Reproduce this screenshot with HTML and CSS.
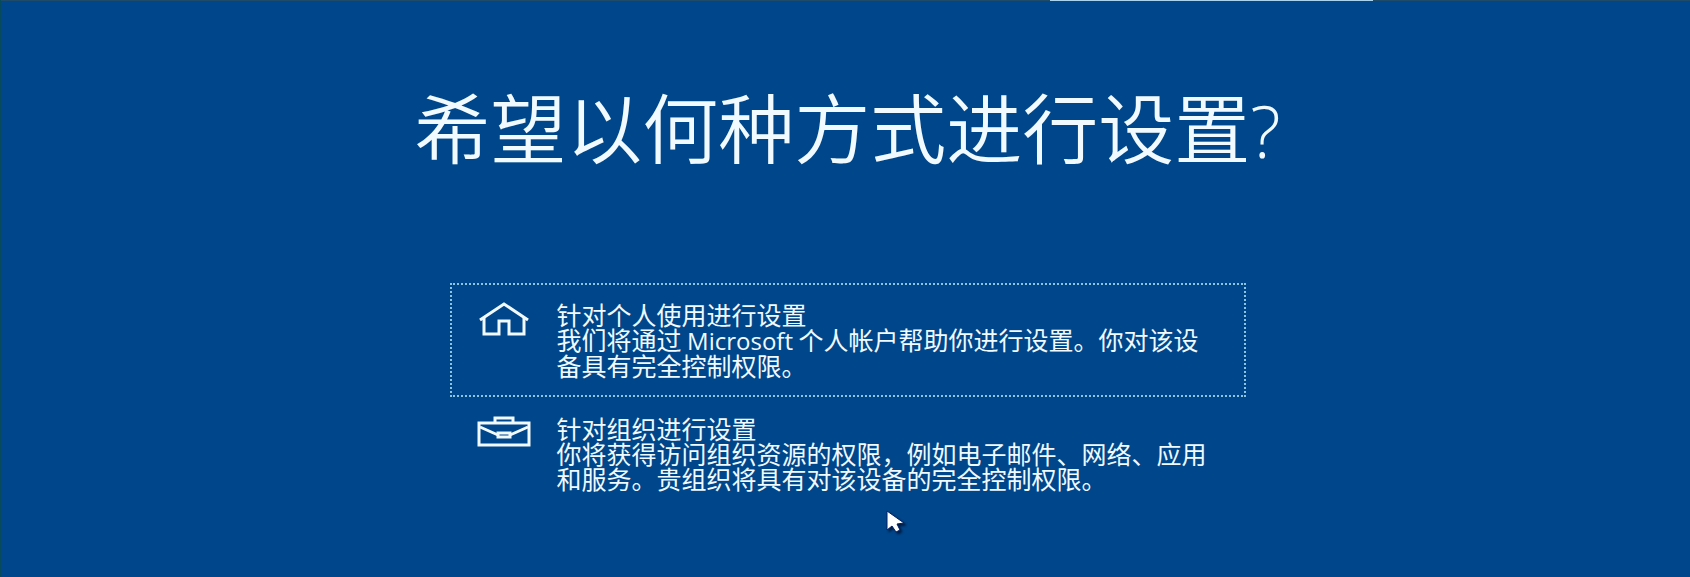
FILE: index.html
```
<!DOCTYPE html>
<html lang="zh-CN">
<head>
    <meta charset="UTF-8">
    <meta name="viewport" content="width=device-width, initial-scale=1.0">
    <title>希望以何种方式进行设置?</title>
    <link rel="stylesheet" href="styles.css">
</head>
<body>

    <!-- Top edge strip -->
    <div class="top-strip">
        <div class="top-strip-tab"></div>
    </div>

    <main class="setup">
        <h1>希望以何种方式进行设置<span class="question-mark">?</span></h1>

        <div class="options">
            <button type="button" class="option selected">
                <svg class="option-icon" viewBox="0 2 54 36" fill="none" stroke="currentColor" stroke-width="3">
                    <path d="M3 20 L27 4 L51 20"/>
                    <path d="M7 17 V34 H22 V21 H32 V34 H47 V17"/>
                </svg>
                <span class="option-text">
                    <span class="option-title">针对个人使用进行设置</span>
                    <span>我们将通过 <span class="latin">Microsoft</span> 个人帐户帮助你进行设置。你对该设<br>备具有完全控制权限。</span>
                </span>
            </button>

            <button type="button" class="option">
                <svg class="option-icon" viewBox="0 2 54 36" fill="none" stroke="currentColor" stroke-width="3">
                    <path d="M2 9 H52 V31 H2 Z"/>
                    <path d="M18 8 V4 H36 V8"/>
                    <path d="M3 13 L21 21 M33 21 L51 13"/>
                    <path d="M21 19 H33 V23 H21 Z"/>
                </svg>
                <span class="option-text">
                    <span class="option-title">针对组织进行设置</span>
                    <span>你将获得访问组织资源的权限，例如电子邮件、网络、应用<br>和服务。贵组织将具有对该设备的完全控制权限。</span>
                </span>
            </button>
        </div>
    </main>

    <!-- Mouse pointer -->
    <svg class="pointer" viewBox="0 0 20 24">
        <path d="M1 1 V20 L6 16 L10 22 L14 20 L11 14 L18 13 Z" fill="#fff" stroke="#00206b" stroke-width="1"/>
    </svg>

</body>
</html>
```
FILE: styles.css
```
* {
    box-sizing: border-box;
}

body {
    margin: 0;
    min-height: 100vh;
    position: relative;
    overflow: hidden;
    background: #00468a;
    border-left: 1px solid #064a5c;
    color: #f0faff;
    font-family: "Noto Sans CJK SC", sans-serif;
}

/* Top edge strip */
.top-strip {
    display: grid;
    grid-template-columns: 1050fr 323fr 317fr;
    height: 1px;
    background: #1f4a68;
}

.top-strip-tab {
    grid-column: 2;
    background: #a9d3ee;
}

/* Page content */
.setup {
    display: flex;
    flex-direction: column;
    align-items: center;
    padding: 74px 0 0 4px;
}

h1 {
    margin: 0;
    font-size: 76px;
    line-height: 100px;
    font-weight: 350;
    white-space: nowrap;
}

.question-mark {
    font-family: "Open Sans", sans-serif;
    font-size: 72px;
    font-weight: 300;
    line-height: 1;
}

.options {
    width: 796px;
    max-width: 100%;
    margin-top: 108px;
}

/* Option rows */
.option {
    display: flex;
    align-items: flex-start;
    gap: 26px;
    width: 100%;
    padding: 17px 25px;
    border: 2px dotted transparent;
    background: none;
    color: inherit;
    font-family: inherit;
    font-size: 25px;
    line-height: 25px;
    text-align: left;
    white-space: nowrap;
    cursor: pointer;
}

.option.selected {
    border-color: #8fc4e0;
}

.option-icon {
    flex: none;
    width: 54px;
    height: 36px;
}

.option-title {
    display: block;
}

.latin {
    font-family: "Open Sans", sans-serif;
    font-size: 24px;
    line-height: 1;
}

/* Mouse pointer */
.pointer {
    position: absolute;
    left: 885px;
    top: 510px;
    width: 20px;
    height: 24px;
    filter: drop-shadow(2px 2px 1px rgba(0, 10, 40, 0.7));
}
```
